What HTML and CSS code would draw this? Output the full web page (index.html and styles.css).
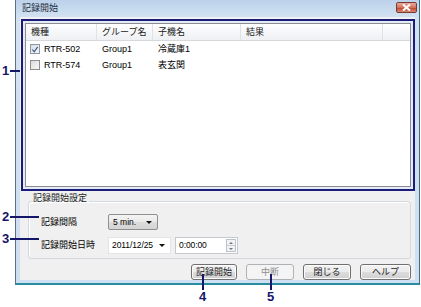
FILE: index.html
```html
<!DOCTYPE html>
<html lang="ja">
<head>
<meta charset="utf-8">
<link rel="stylesheet" href="styles.css">
</head>
<body>
<div class="window">
  <div class="titlebar">
    <span class="title">記録開始</span>
    <span class="close"><svg width="9" height="7" viewBox="0 0 9 7"><path d="M1 0.5 L8 6.5 M8 0.5 L1 6.5" stroke="#fff" stroke-width="2"/></svg></span>
  </div>
  <div class="client">
    <div class="hl">
      <div class="list">
        <div class="lhead">
          <div class="c c1">機種</div>
          <div class="c c2">グループ名</div>
          <div class="c c3">子機名</div>
          <div class="c c4">結果</div>
          <div class="c c5"></div>
        </div>
        <div class="lrow">
          <div class="c c1"><span class="cb checked"><svg width="9" height="9" viewBox="0 0 9 9"><path d="M1.5 4.5 L3.6 7 L7.5 1.5" fill="none" stroke="#3d5a8a" stroke-width="1.3"/></svg></span>RTR-502</div>
          <div class="c c2">Group1</div>
          <div class="c c3">冷蔵庫1</div>
        </div>
        <div class="lrow">
          <div class="c c1"><span class="cb"></span>RTR-574</div>
          <div class="c c2">Group1</div>
          <div class="c c3">表玄関</div>
        </div>
      </div>
    </div>
    <fieldset class="settings">
      <legend class="legend">記録開始設定</legend>
      <div class="frow">
        <span class="flabel">記録間隔</span>
        <span class="combo">5 min.<span class="arrow"></span></span>
      </div>
      <div class="frow frow2">
        <span class="flabel">記録開始日時</span>
        <span class="date">2011/12/25<span class="arrow"></span></span>
        <span class="time">0:00:00<span class="spin"><span class="sp up"></span><span class="sp down"></span></span></span>
      </div>
    </fieldset>
    <div class="buttons">
      <span class="btn b1">記録開始</span>
      <span class="btn b2 disabled">中断</span>
      <span class="btn b3">閉じる</span>
      <span class="btn b4">ヘルプ</span>
    </div>
  </div>
</div>

<div class="ann a1"><span class="num">1</span><span class="hline"></span></div>
<div class="ann a2"><span class="num">2</span><span class="hline"></span></div>
<div class="ann a3"><span class="num">3</span><span class="hline"></span></div>
<div class="ann v a4"><span class="vline"></span><span class="num">4</span></div>
<div class="ann v a5"><span class="vline"></span><span class="num">5</span></div>
</body>
</html>
```

FILE: styles.css
```css
* { box-sizing: border-box; }
body {
  margin: 0;
  width: 421px;
  height: 307px;
  background: #fff;
  font: 9px/11px "Liberation Sans", "Noto Sans CJK JP", sans-serif;
  color: #000;
  position: relative;
  overflow: hidden;
}
.window {
  margin-left: 15px;
  width: 405px;
  height: 285px;
  border: 1px solid #5d6e80;
  border-top: none;
  border-right-color: #3b6f85;
  border-bottom: 2px solid #2a8ca0;
  background: linear-gradient(#bcd2ea, #d3e2f2 18px, #cddff1);
  padding: 0 4px 3px 4px;
  display: flex;
  flex-direction: column;
}
.titlebar {
  height: 18px;
  display: flex;
  align-items: center;
  justify-content: space-between;
  padding: 0 0 0 2px;
}
.title { font-size: 9px; color: #1e2b3a; margin-top: 0; }
.close {
  width: 21px;
  height: 11px;
  margin-right: -2px;
  margin-top: -3px;
  border: 1px solid #7a3a33;
  border-radius: 2px;
  background: linear-gradient(#e9a99a, #d3705c 50%, #c0432c 55%, #d98a72);
  display: flex;
  align-items: center;
  justify-content: center;
}
.client {
  flex: 1;
  background: #f0f0f0;
  padding: 2px 0 0 1px;
  display: flex;
  flex-direction: column;
}
.hl {
  width: 394px;
  height: 172px;
  border: 2px solid #1c1c7a;
  padding: 2px;
  background: #e4ebf3;
}
.list {
  height: 100%;
  border: 1px solid #8a8d93;
  background: #fff;
}
.lhead {
  display: flex;
  height: 17px;
  background: linear-gradient(#ffffff, #f6f7f9 50%, #eef0f3);
  border-bottom: 1px solid #d6d8dc;
}
.lhead .c {
  border-right: 1px solid #dfe2e6;
  padding-left: 5px;
  display: flex;
  align-items: center;
  color: #222;
}
.c1 { width: 71px; }
.c2 { width: 56px; }
.c3 { width: 88px; }
.c4 { width: 142px; }
.c5 { flex: 1; }
.lhead .c5 { border-right: none; }
.lrow {
  display: flex;
  height: 16px;
  align-items: center;
}
.lrow .c { padding-left: 5px; display: flex; align-items: center; }
.lrow .c1 { padding-left: 4px; }
.cb {
  width: 10px;
  height: 10px;
  border: 1px solid #8f8f8f;
  background: linear-gradient(135deg, #dcdcdc, #f8f8f8);
  margin-right: 4px;
  display: flex;
  align-items: center;
  justify-content: center;
}
.cb.checked { background: linear-gradient(135deg, #d6dfea, #f3f6fa); border-color: #8d97a5; }
.settings {
  margin: 2px 4px 0 7px;
  padding: 4px 8px 4px 4px;
  border: 1px solid #d3d9de;
  border-radius: 3px;
  box-shadow: inset 1px 1px 0 #fff;
  min-width: 0;
}
.legend {
  padding: 0 2px 6px 0;
  line-height: 11px;
  color: #222;
}
.frow {
  display: flex;
  align-items: center;
  height: 16px;
  padding-left: 8px;
}
.frow2 { margin-top: 7px; height: 17px; }
.flabel { width: 67px; }
.combo {
  width: 50px;
  height: 16px;
  border: 1px solid #8e8f8f;
  border-radius: 2px;
  background: linear-gradient(#f4f4f4, #e9e9e9 50%, #dcdcdc 51%, #d4d4d4);
  display: flex;
  align-items: center;
  justify-content: space-between;
  padding: 0 5px 0 4px;
  font-size: 8.5px;
}
.arrow {
  width: 0;
  height: 0;
  border-left: 3px solid transparent;
  border-right: 3px solid transparent;
  border-top: 3px solid #111;
}
.date, .time {
  height: 17px;
  background: #fff;
  border: 1px solid #e2e5e8;
  display: flex;
  align-items: center;
  justify-content: space-between;
  padding: 0 5px 0 3px;
  font-size: 8.5px;
  letter-spacing: -0.1px;
}
.date { width: 63px; }
.time { width: 63px; margin-left: 4px; padding-right: 1px; border-color: #c5c9cf; }
.spin {
  width: 10px;
  height: 13px;
  border: 1px solid #bcc2c8;
  display: flex;
  flex-direction: column;
  background: #f0f2f4;
}
.sp { flex: 1; display: flex; align-items: center; justify-content: center; }
.sp.up { border-bottom: 1px solid #c9ced3; }
.sp.up::before {
  content: "";
  border-left: 2px solid transparent;
  border-right: 2px solid transparent;
  border-bottom: 2px solid #6e7780;
}
.sp.down::before {
  content: "";
  border-left: 2px solid transparent;
  border-right: 2px solid transparent;
  border-top: 2px solid #6e7780;
}
.buttons {
  display: flex;
  justify-content: flex-end;
  gap: 9px;
  margin-top: 5px;
  padding-right: 4px;
}
.btn {
  width: 48px;
  height: 16px;
  border: 1px solid #707070;
  border-radius: 3px;
  background: linear-gradient(#f2f2f2, #ebebeb 50%, #dddddd 51%, #cfcfcf);
  box-shadow: inset 0 0 0 1px #fcfcfc;
  display: flex;
  align-items: center;
  justify-content: center;
  color: #222;
}
.b1 { width: 46px; }
.b4 { width: 51px; }
.btn.disabled {
  border-color: #adb2b5;
  background: #f4f4f4;
  box-shadow: none;
  color: #8d8d8d;
}
.ann {
  position: absolute;
  display: flex;
  align-items: center;
  color: #15156a;
}
.num {
  font: bold 13px/13px "Liberation Sans", sans-serif;
  color: #15156a;
}
.hline { height: 2px; background: #15156a; margin-left: 1px; }
.a1 { left: 2px; top: 64px; }
.a1 .hline { width: 10px; }
.a2 { left: 2px; top: 210px; }
.a2 .hline { width: 29px; }
.a3 { left: 2px; top: 232px; }
.a3 .hline { width: 29px; }
.ann.v { flex-direction: column; }
.vline { width: 2px; height: 16px; background: #15156a; }
.a4 { left: 199px; top: 274px; }
.a5 { left: 267px; top: 274px; }
```
